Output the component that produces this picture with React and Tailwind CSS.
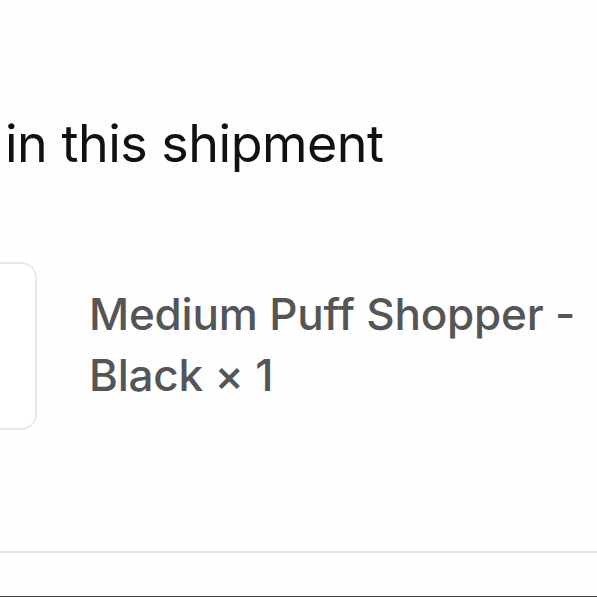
export default function App() {
  return (
    <div className="flex h-[597px] w-[597px] flex-col overflow-hidden bg-[#fefefe] font-['Inter','Liberation_Sans',sans-serif]">
      <div className="h-[106px]" />
      <h2 className="pl-[5px] text-[52px] leading-[76px] font-normal text-[#111] tracking-[-0.5px]">
        in this shipment
      </h2>
      <div className="mt-[80px] flex items-start">
        <div className="-ml-[131px] h-[168px] w-[168px] shrink-0 rounded-[16px] border-2 border-[#e8e8e8] bg-white" />
        <div className="ml-[52px] pt-[22px] text-[44px] leading-[61px] font-medium text-[#555] tracking-[-0.2px]">
          <p>Medium Puff Shopper -</p>
          <p>Black × 1</p>
        </div>
      </div>
      <div className="flex-1" />
      <div className="mb-[43px] h-[2px] bg-[#e2e2e2]" />
      <div className="h-[1px] bg-[#444]" />
    </div>
  );
}
